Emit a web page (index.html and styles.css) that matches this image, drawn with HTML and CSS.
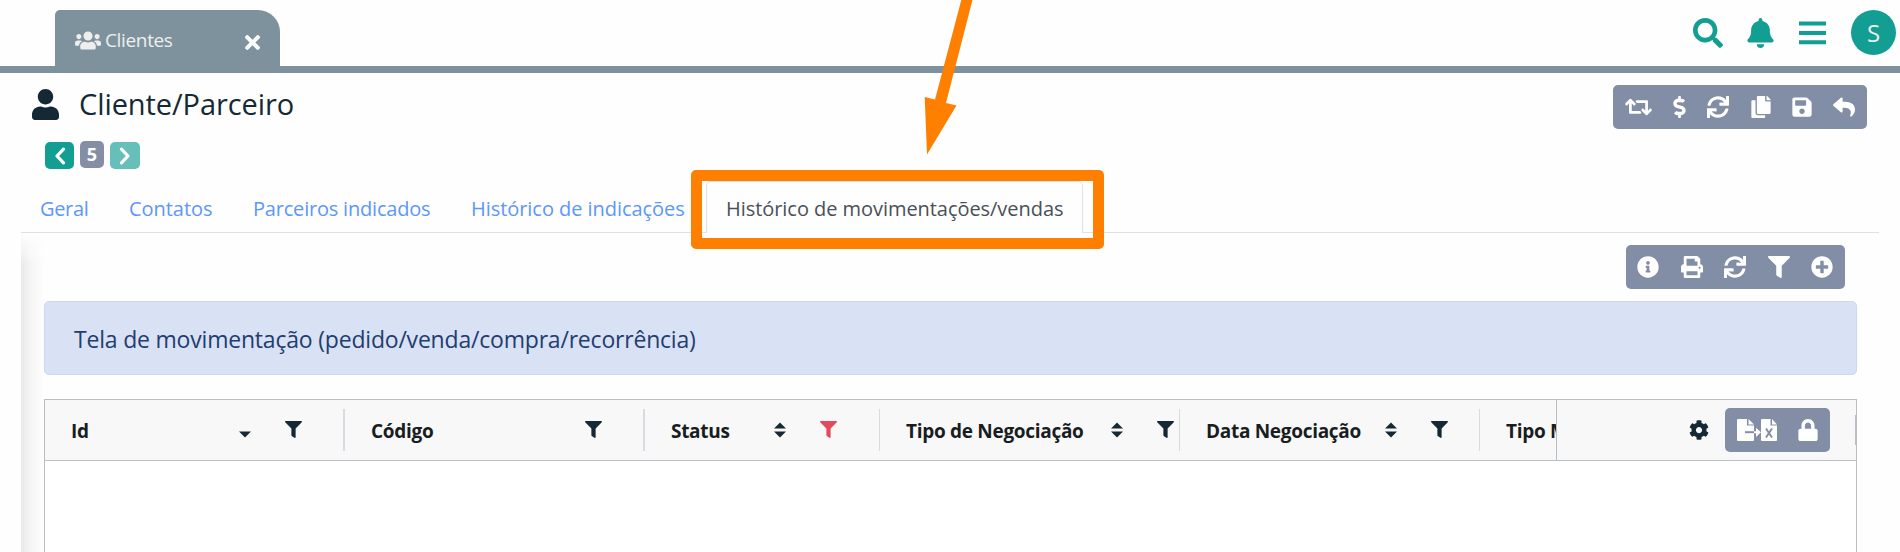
FILE: index.html
```html
<!DOCTYPE html>
<html lang="pt-BR">
<head>
<meta charset="utf-8">
<title>Cliente/Parceiro</title>
<link rel="stylesheet" href="styles.css">
</head>
<body>
<svg class="sprite" aria-hidden="true">
  <symbol id="search" viewBox="0 0 512 512"><path d="M505 442.7L405.3 343c-4.5-4.5-10.6-7-17-7H372c27.6-35.3 44-79.7 44-128C416 93.1 322.9 0 208 0S0 93.1 0 208s93.1 208 208 208c48.3 0 92.7-16.4 128-44v16.3c0 6.4 2.5 12.5 7 17l99.7 99.7c9.4 9.4 24.6 9.4 33.9 0l28.3-28.3c9.4-9.4 9.4-24.6.1-34zM208 336c-70.7 0-128-57.2-128-128 0-70.7 57.2-128 128-128 70.7 0 128 57.2 128 128 0 70.7-57.2 128-128 128z"/></symbol>
  <symbol id="bell" viewBox="0 0 448 512"><path d="M224 512c35.32 0 63.97-28.65 63.97-64H160.03c0 35.35 28.65 64 63.97 64zm215.39-149.71c-19.32-20.76-55.47-51.99-55.47-154.29 0-77.7-54.48-139.9-127.94-155.16V32c0-17.67-14.32-32-31.98-32s-31.98 14.33-31.98 32v20.84C118.56 68.1 64.08 130.3 64.08 208c0 102.3-36.15 133.53-55.47 154.29-6 6.45-8.66 14.16-8.61 21.71.11 16.4 12.98 32 32.1 32h383.8c19.12 0 32-15.6 32.1-32 .05-7.55-2.61-15.27-8.61-21.71z"/></symbol>
  <symbol id="bars" viewBox="0 0 27 24"><path d="M0 .5h27v4H0zM0 10h27v4H0zM0 19.300h27v4H0z"/></symbol>
  <symbol id="user" viewBox="0 0 448 512"><path d="M224 256c70.7 0 128-57.3 128-128S294.7 0 224 0 96 57.3 96 128s57.3 128 128 128zm89.6 32h-16.7c-22.2 10.2-46.9 16-72.9 16s-50.6-5.8-72.9-16h-16.7C60.2 288 0 348.2 0 422.4V464c0 26.5 21.5 48 48 48h352c26.5 0 48-21.5 48-48v-41.6c0-74.2-60.2-134.4-134.4-134.4z"/></symbol>
  <symbol id="users" viewBox="0 0 640 512"><path d="M96 224c35.3 0 64-28.7 64-64s-28.7-64-64-64-64 28.7-64 64 28.7 64 64 64zm448 0c35.3 0 64-28.7 64-64s-28.7-64-64-64-64 28.7-64 64 28.7 64 64 64zm32 32h-64c-17.600 0-33.5 7.1-45.1 18.600 40.3 22.1 68.9 62 75.1 109.4h66c17.7 0 32-14.3 32-32v-32c0-35.3-28.7-64-64-64zm-256 0c61.9 0 112-50.1 112-112S381.9 32 320 32 208 82.1 208 144s50.1 112 112 112zm76.8 32h-8.3c-20.8 10-43.9 16-68.5 16s-47.6-6-68.5-16h-8.3C179.6 288 128 339.6 128 403.2V432c0 26.5 21.5 48 48 48h288c26.5 0 48-21.5 48-48v-28.8c0-63.6-51.6-115.2-115.2-115.2zm-223.7-13.4C161.5 263.1 145.6 256 128 256H64c-35.3 0-64 28.7-64 64v32c0 17.7 14.3 32 32 32h65.9c6.3-47.4 34.9-87.3 75.2-109.4z"/></symbol>
  <symbol id="times" viewBox="0 80 352 352"><path d="M242.72 256l100.07-100.07c12.28-12.28 12.28-32.19 0-44.48l-22.24-22.24c-12.28-12.28-32.19-12.28-44.48 0L176 189.28 75.93 89.21c-12.28-12.28-32.19-12.28-44.48 0L9.21 111.45c-12.28 12.28-12.28 32.19 0 44.48L109.28 256 9.21 356.07c-12.28 12.28-12.28 32.19 0 44.48l22.24 22.24c12.28 12.28 32.2 12.28 44.48 0L176 322.72l100.07 100.07c12.28 12.28 32.2 12.28 44.48 0l22.24-22.24c12.28-12.28 12.28-32.19 0-44.48L242.72 256z"/></symbol>
  <symbol id="retweet" viewBox="0 0 640 512"><path d="M629.657 343.598L528.971 444.284c-9.373 9.372-24.568 9.372-33.941 0L394.343 343.598c-9.373-9.373-9.373-24.569 0-33.941l10.823-10.823c9.562-9.562 25.133-9.34 34.419.492L480 342.118V160H292.451a24.005 24.005 0 0 1-16.971-7.029l-16-16C244.361 121.851 255.069 96 276.451 96H520c13.255 0 24 10.745 24 24v222.118l40.416-42.792c9.285-9.831 24.856-10.054 34.419-.492l10.823 10.823c9.372 9.372 9.372 24.569-.001 33.941zm-265.138 15.431A23.999 23.999 0 0 0 347.548 352H160V169.881l40.416 42.792c9.286 9.831 24.856 10.054 34.419.491l10.822-10.822c9.373-9.373 9.373-24.569 0-33.941L144.971 67.716c-9.373-9.373-24.569-9.373-33.941 0L10.343 168.402c-9.373 9.373-9.373 24.569 0 33.941l10.822 10.822c9.562 9.562 25.133 9.34 34.419-.491L96 169.881V392c0 13.255 10.745 24 24 24h243.549c21.382 0 32.09-25.851 16.971-40.971l-16.001-16z"/></symbol>
  <symbol id="dollar" viewBox="0 0 288 512"><path d="M209.2 233.4l-108-31.6C88.7 198.2 80 186.5 80 173.5c0-16.3 13.2-29.5 29.5-29.5h66.3c12.2 0 24.2 3.7 34.2 10.5 6.1 4.1 14.3 3.1 19.5-2l34.8-34c7.1-6.9 6.1-18.4-1.8-24.5C238 74.8 207.4 64.1 176 64V16c0-8.8-7.2-16-16-16h-32c-8.8 0-16 7.2-16 16v48h-2.5C45.8 64-5.4 118.7.5 183.6c4.2 46.1 39.4 83.6 83.8 96.6l102.5 30c12.5 3.7 21.2 15.3 21.2 28.3 0 16.3-13.2 29.5-29.5 29.5h-66.3C100 368 88 364.3 78 357.5c-6.1-4.1-14.3-3.1-19.5 2l-34.8 34c-7.1 6.9-6.1 18.4 1.8 24.5 24.5 19.2 55.1 29.9 86.5 30v48c0 8.8 7.2 16 16 16h32c8.8 0 16-7.2 16-16v-48.2c46.6-.9 90.3-28.6 105.7-72.7 21.5-61.6-14.6-124.8-72.5-141.7z"/></symbol>
  <symbol id="sync" viewBox="0 0 512 512"><path d="M440.65 12.57l4 82.77A247.16 247.16 0 0 0 255.83 8C134.73 8 33.91 94.92 12.29 209.82A12 12 0 0 0 24.09 224h49.05a12 12 0 0 0 11.67-9.26 175.91 175.91 0 0 1 317-56.94l-101.46-4.86a12 12 0 0 0-12.57 12v47.41a12 12 0 0 0 12 12H500a12 12 0 0 0 12-12V12a12 12 0 0 0-12-12h-47.37a12 12 0 0 0-11.98 12.57zM255.83 432a175.61 175.61 0 0 1-146-77.8l101.8 4.87a12 12 0 0 0 12.57-12v-47.4a12 12 0 0 0-12-12H12a12 12 0 0 0-12 12V500a12 12 0 0 0 12 12h47.35a12 12 0 0 0 12-12.6l-4.15-82.57A247.17 247.17 0 0 0 255.83 504c121.11 0 221.93-86.92 243.55-201.82a12 12 0 0 0-11.8-14.18h-49.05a12 12 0 0 0-11.67 9.26A175.86 175.86 0 0 1 255.83 432z"/></symbol>
  <symbol id="copy" viewBox="0 0 448 512"><path d="M320 448v40c0 13.255-10.745 24-24 24H24c-13.255 0-24-10.745-24-24V120c0-13.255 10.745-24 24-24h72v296c0 30.879 25.121 56 56 56h168zm0-344V0H152c-13.255 0-24 10.745-24 24v368c0 13.255 10.745 24 24 24h272c13.255 0 24-10.745 24-24V128H344c-13.2 0-24-10.8-24-24zm120.971-31.029L375.029 7.029A24 24 0 0 0 358.059 0H352v96h96v-6.059a24 24 0 0 0-7.029-16.97z"/></symbol>
  <symbol id="save" viewBox="0 0 448 512"><path d="M433.941 129.941l-83.882-83.882A48 48 0 0 0 316.118 32H48C21.49 32 0 53.49 0 80v352c0 26.51 21.49 48 48 48h352c26.51 0 48-21.49 48-48V163.882a48 48 0 0 0-14.059-33.941zM224 416c-35.346 0-64-28.654-64-64 0-35.346 28.654-64 64-64s64 28.654 64 64c0 35.346-28.654 64-64 64zm96-304.52V212c0 6.627-5.373 12-12 12H76c-6.627 0-12-5.373-12-12V108c0-6.627 5.373-12 12-12h228.52c3.183 0 6.235 1.264 8.485 3.515l3.48 3.48A11.996 11.996 0 0 1 320 111.48z"/></symbol>
  <symbol id="reply" viewBox="0 0 512 512"><path d="M8.309 189.836L184.313 37.851C199.719 24.546 224 35.347 224 56.015v80.053c160.629 1.839 288 34.032 288 186.258 0 61.441-39.581 122.309-83.333 154.132-13.653 9.931-33.111-2.533-28.077-18.631 45.344-145.012-21.507-183.51-176.59-185.742V360c0 20.7-24.3 31.453-39.687 18.164l-176.004-152c-11.071-9.562-11.086-26.753 0-36.328z"/></symbol>
  <symbol id="info" viewBox="0 0 512 512"><path d="M256 8C119.043 8 8 119.083 8 256c0 136.997 111.043 248 248 248s248-111.003 248-248C504 119.083 392.957 8 256 8zm0 110c23.196 0 42 18.804 42 42s-18.804 42-42 42-42-18.804-42-42 18.804-42 42-42zm56 254c0 6.627-5.373 12-12 12h-88c-6.627 0-12-5.373-12-12v-24c0-6.627 5.373-12 12-12h12v-64h-12c-6.627 0-12-5.373-12-12v-24c0-6.627 5.373-12 12-12h64c6.627 0 12 5.373 12 12v100h12c6.627 0 12 5.373 12 12v24z"/></symbol>
  <symbol id="print" viewBox="0 0 512 512"><path d="M448 192V77.25c0-8.49-3.37-16.62-9.37-22.63L393.37 9.37c-6-6-14.14-9.37-22.63-9.37H96C78.33 0 64 14.33 64 32v160c-35.35 0-64 28.65-64 64v112c0 8.84 7.16 16 16 16h48v96c0 17.67 14.33 32 32 32h320c17.67 0 32-14.33 32-32v-96h48c8.84 0 16-7.16 16-16V256c0-35.35-28.65-64-64-64zm-64 256H128v-96h256v96zm0-224H128V64h192v48c0 8.84 7.16 16 16 16h48v96zm48 72c-13.25 0-24-10.75-24-24 0-13.26 10.75-24 24-24s24 10.74 24 24c0 13.25-10.75 24-24 24z"/></symbol>
  <symbol id="filter" viewBox="0 0 512 512"><path d="M487.976 0H24.028C2.71 0-8.047 25.866 7.058 40.971L192 225.941V432c0 7.831 3.821 15.17 10.237 19.662l80 55.98C298.02 518.69 320 507.493 320 487.98V225.941l184.947-184.97C520.021 25.896 509.338 0 487.976 0z"/></symbol>
  <symbol id="plus" viewBox="0 0 512 512"><path d="M256 8C119 8 8 119 8 256s111 248 248 248 248-111 248-248S393 8 256 8zm144 276c0 6.6-5.4 12-12 12h-92v92c0 6.6-5.4 12-12 12h-56c-6.6 0-12-5.4-12-12v-92h-92c-6.6 0-12-5.4-12-12v-56c0-6.6 5.4-12 12-12h92v-92c0-6.6 5.4-12 12-12h56c6.6 0 12 5.4 12 12v92h92c6.6 0 12 5.4 12 12v56z"/></symbol>
  <symbol id="cog" viewBox="0 0 512 512"><path d="M487.4 315.7l-42.6-24.6c4.3-23.2 4.3-47 0-70.2l42.6-24.6c4.9-2.8 7.1-8.6 5.5-14-11.1-35.6-30-67.8-54.7-94.6-3.8-4.1-10-5.1-14.8-2.3L380.8 110c-17.9-15.4-38.5-27.3-60.8-35.1V25.8c0-5.6-3.9-10.5-9.4-11.7-36.7-8.2-74.3-7.8-109.2 0-5.5 1.2-9.4 6.1-9.4 11.7V75c-22.2 7.9-42.8 19.8-60.8 35.1L88.7 85.5c-4.9-2.8-11-1.9-14.8 2.3-24.7 26.7-43.6 58.9-54.7 94.6-1.7 5.4.6 11.2 5.5 14L67.3 221c-4.3 23.2-4.3 47 0 70.2l-42.6 24.6c-4.9 2.8-7.1 8.6-5.5 14 11.1 35.6 30 67.8 54.7 94.6 3.8 4.1 10 5.1 14.8 2.3l42.6-24.6c17.9 15.4 38.5 27.3 60.8 35.1v49.2c0 5.6 3.9 10.5 9.4 11.7 36.7 8.2 74.3 7.8 109.2 0 5.5-1.2 9.4-6.1 9.4-11.7v-49.2c22.2-7.9 42.8-19.8 60.8-35.1l42.6 24.6c4.9 2.8 11 1.9 14.8-2.3 24.7-26.7 43.6-58.9 54.7-94.6 1.5-5.5-.7-11.3-5.6-14.1zM256 336c-44.1 0-80-35.9-80-80s35.9-80 80-80 80 35.9 80 80-35.9 80-80 80z"/></symbol>
  <symbol id="lock" viewBox="0 0 448 512"><path d="M400 224h-24v-72C376 68.2 307.8 0 224 0S72 68.2 72 152v72H48c-26.5 0-48 21.5-48 48v192c0 26.5 21.5 48 48 48h352c26.5 0 48-21.5 48-48V272c0-26.5-21.5-48-48-48zm-104 0H152v-72c0-39.7 32.3-72 72-72s72 32.3 72 72v72z"/></symbol>
  <symbol id="sort" viewBox="0 0 12 16"><path d="M0 6.500 6 .5l6 6zM0 9.500h12l-6 6z"/></symbol>
  <symbol id="desc" viewBox="0 0 12 16"><path d="M0 9.500h12l-6 6z"/></symbol>
</svg>

<header class="topbar">
  <div class="app-tab">
    <svg class="users"><use href="#users"/></svg>
    <span class="app-tab-label">Clientes</span>
    <svg class="close"><use href="#times"/></svg>
  </div>
  <div class="top-actions">
    <svg class="a-search"><use href="#search"/></svg>
    <svg class="a-bell"><use href="#bell"/></svg>
    <svg class="a-bars"><use href="#bars"/></svg>
    <span class="avatar">S</span>
  </div>
</header>

<section class="page-head">
  <div>
    <div class="title-row">
      <svg class="title-icon"><use href="#user"/></svg>
      <h1>Cliente/Parceiro</h1>
    </div>
    <div class="pager">
      <span class="pg prev"><svg viewBox="0 0 12 18"><path d="M9.500 2.200 3 9l6.500 6.800"/></svg></span>
      <span class="pg num">5</span>
      <span class="pg next"><svg viewBox="0 0 12 18"><path d="M2.500 2.200 9 9l-6.500 6.800"/></svg></span>
    </div>
  </div>
  <div class="toolbar">
    <svg class="i-wide"><use href="#retweet"/></svg>
    <svg class="i-thin"><use href="#dollar"/></svg>
    <svg class="i"><use href="#sync"/></svg>
    <svg class="i-mid"><use href="#copy"/></svg>
    <svg class="i-mid"><use href="#save"/></svg>
    <svg class="i"><use href="#reply"/></svg>
  </div>
</section>

<nav class="tabs">
  <a class="t1">Geral</a>
  <a class="t2">Contatos</a>
  <a class="t3">Parceiros indicados</a>
  <a class="t4">Histórico de indicações</a>
  <a class="t5 active">Histórico de movimentações/vendas</a>
</nav>

<main class="panel">
  <div class="toolbar sub">
    <svg class="i"><use href="#info"/></svg>
    <svg class="i"><use href="#print"/></svg>
    <svg class="i"><use href="#sync"/></svg>
    <svg class="i"><use href="#filter"/></svg>
    <svg class="i"><use href="#plus"/></svg>
  </div>
  <div class="notice"><span>Tela de movimentação (pedido/venda/compra/recorrência)</span></div>
  <div class="grid">
    <div class="grid-head">
      <div class="cols">
        <div class="col c-id"><span>Id</span><svg class="sort"><use href="#desc"/></svg><svg class="funnel"><use href="#filter"/></svg></div>
        <div class="col c-cod"><span>Código</span><svg class="funnel"><use href="#filter"/></svg></div>
        <div class="col c-status"><span>Status</span><svg class="sort"><use href="#sort"/></svg><svg class="funnel on"><use href="#filter"/></svg></div>
        <div class="col c-tipo"><span>Tipo de Negociação</span><svg class="sort"><use href="#sort"/></svg><svg class="funnel"><use href="#filter"/></svg></div>
        <div class="col c-data"><span>Data Negociação</span><svg class="sort"><use href="#sort"/></svg><svg class="funnel"><use href="#filter"/></svg></div>
        <div class="col c-last"><span>Tipo Movimento</span></div>
      </div>
      <div class="pinned">
        <svg class="cog"><use href="#cog"/></svg>
        <div class="toolbar mini">
          <svg class="export" viewBox="0 0 40 22">
            <path class="w" d="M1 0h9v6.500h7V21q0 1-1 1H1q-1 0-1-1V1q0-1 1-1zM11.500 0l5.500 5.500h-5.500zM25 0h8.500v6.500H40V21q0 1-1 1H25q-1 0-1-1V1q0-1 1-1zM35 0l5 5.500h-5z"/>
            <path class="g" d="M8 12.200h9v2H8z"/>
            <path class="w" d="M17 12.200h2V8.800l5 4.400-5 4.700v-3.700h-2z"/>
            <path class="x" d="M29 9.500l6 9M35 9.500l-6 9"/>
          </svg>
          <svg class="i-mid"><use href="#lock"/></svg>
        </div>
        <span class="handle"></span>
      </div>
    </div>
    <div class="grid-body"></div>
  </div>
</main>

<div class="callout"></div>
<svg class="arrow" viewBox="0 0 60 156"><path d="M38.300 0H49.500L23 103 33.500 105.500 4 154.500 1.700 97 12 99.500z"/></svg>
</body>
</html>
```
FILE: styles.css
```css
* { box-sizing: border-box; }
body { margin: 0; width: 1900px; height: 552px; overflow: hidden; position: relative; background: #fefefe; font-family: "Open Sans", "Noto Sans", sans-serif; color: #152935; }
svg { display: block; flex: none; fill: currentColor; }
.sprite { position: absolute; width: 0; height: 0; }

.topbar { height: 73px; border-bottom: 7px solid #7d929c; padding: 10px 4px 0 55px; display: flex; justify-content: space-between; align-items: flex-start; }
.app-tab { width: 225px; height: 56px; background: #7d929c; border-radius: 5px 22px 0 0; display: flex; align-items: center; padding: 0 20px; color: #eee; font-size: 19px; }
.users { width: 26px; height: 21px; margin-top: 4px; }
.app-tab-label { margin: 3px 0 0 4px; letter-spacing: -.35px; white-space: nowrap; }
.close { width: 15px; height: 15px; margin: 9px 0 0 auto; color: #fff; }
.top-actions { display: flex; align-items: center; height: 45px; color: #129e92; }
.a-search { width: 30px; height: 30px; }
.a-bell { width: 27px; height: 30px; margin-left: 24px; }
.a-bars { width: 27px; height: 24px; margin-left: 25px; }
.avatar { width: 45px; height: 45px; margin-left: 25px; border-radius: 50%; background: #129e92; color: #eee; font-size: 24px; display: grid; place-items: center; }

.page-head { height: 107px; display: flex; justify-content: space-between; align-items: flex-start; padding: 12px 33px 0 32px; }
.title-row { display: flex; align-items: center; height: 38px; }
.title-icon { width: 27px; height: 31px; }
h1 { margin: 0 0 0 20px; font-size: 29px; font-weight: 500; letter-spacing: -.08px; line-height: 38px; white-space: nowrap; }
.pager { display: flex; margin: 18px 0 0 13px; gap: 6px; }
.pg { height: 27px; border-radius: 5px; display: grid; place-items: center; color: #fff; margin-top: 1px; }
.pg svg { width: 12px; height: 18px; fill: none; stroke: #fff; stroke-width: 3.200; stroke-linecap: round; stroke-linejoin: round; }
.prev { width: 29px; background: #129e92; }
.num { width: 24px; background: #848fa7; font-size: 18px; font-weight: 700; line-height: 27px; margin-top: 0; }
.next { width: 30px; background: #66bfb8; }
.toolbar { height: 44px; width: 254px; padding: 0 12px; border-radius: 5px; background: #828ea6; color: #fff; display: flex; align-items: center; justify-content: space-between; }
.i { width: 22px; height: 22px; }
.i-mid { width: 20px; height: 22px; }
.i-thin { width: 13px; height: 22px; }
.i-wide { width: 27px; height: 22px; }

.tabs { margin: 0 21px; height: 53px; border-bottom: 1px solid #dee2e6; display: flex; font-size: 20px; line-height: 57px; color: #5c97fb; white-space: nowrap; }
.tabs a { padding-left: 19px; height: 52px; }
.t1 { width: 89px; letter-spacing: -.35px; }
.t2 { width: 124px; letter-spacing: -.05px; }
.t3 { width: 218px; letter-spacing: -.2px; }
.t4 { width: 254px; letter-spacing: -.05px; }
.tabs .active { width: 377px; height: 52px; margin-top: 1px; line-height: 53px; letter-spacing: -.05px; border: 1px solid #dee2e6; border-bottom: 0; border-radius: 5px 5px 0 0; background: #fefefe; color: #495057; }

.panel { position: relative; margin-left: 21px; height: 319px; padding: 12px 43px 0 23px; }
.panel::before { content: ""; position: absolute; left: 0; top: 0; width: 24px; height: 100%; background: linear-gradient(90deg, #e9e9e9, #f5f5f5 40%, #fefefe); -webkit-mask-image: linear-gradient(transparent, #000 32px); mask-image: linear-gradient(transparent, #000 32px); }
.panel > * { position: relative; }
.sub { width: 219px; margin: 0 12px 0 auto; padding: 0 12px 0 11px; }
.notice { height: 74px; margin-top: 12px; border: 1px solid #cad8f5; border-radius: 5px; background: #d8e2f4; color: #233d70; padding-left: 29px; line-height: 74px; font-size: 23px; letter-spacing: -.2px; white-space: nowrap; }
.grid { margin-top: 24px; border: 1px solid #babfc7; height: 160px; background: #fff; width: 1813px; }
.grid-head { height: 61px; border-bottom: 1px solid #babfc7; background: #f8f8f8; display: flex; font-size: 19px; font-weight: 700; color: #181d1f; }
.cols { width: 1511px; display: flex; overflow: hidden; }
.col { flex: none; width: 300px; height: 42px; margin-top: 9px; border-right: 1px solid #d8dce0; padding: 0 42px 0 26px; display: flex; align-items: center; white-space: nowrap; }
.c-id, .c-cod { border-right-width: 2px; padding-right: 41px; }
.c-status { width: 235px; padding-right: 42px; }
.c-tipo { padding-right: 5px; }
.c-data { padding-right: 31px; }
.c-last { border: 0; }
.col span { letter-spacing: -.3px; padding-top: 2px; }
.col .sort { width: 12px; height: 16px; margin-left: auto; color: #152935; margin-bottom: 1px; }
.col .funnel { width: 17px; height: 17px; margin-left: 34px; color: #152935; margin-bottom: 1px; }
.c-cod .funnel { margin-left: auto; }
.col .on { color: #e34a5c; }
.pinned { flex: 1; border-left: 1px solid #babfc7; display: flex; align-items: center; padding-left: 132px; color: #152935; }
.cog { width: 20px; height: 20px; margin-bottom: 1px; }
.mini { width: 105px; margin-left: 16px; }
.export { width: 40px; height: 22px; }
.export .g { fill: #828ea6; }
.export .x { fill: none; stroke: #828ea6; stroke-width: 2; }
.handle { width: 1px; height: 30px; margin-left: auto; background: #babfc7; }

.callout { position: absolute; left: 691px; top: 170px; width: 413px; height: 79px; border: 11px solid #ff8000; border-radius: 5px; }
.arrow { position: absolute; left: 923px; top: 0; width: 60px; height: 156px; fill: #ff8000; }
```
